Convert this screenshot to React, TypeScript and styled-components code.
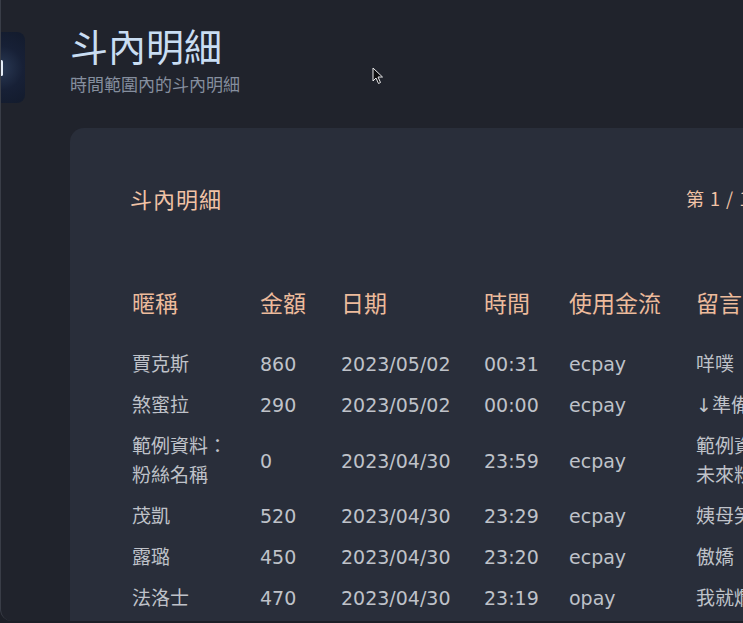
import React, { FC } from 'react'
import styled, { createGlobalStyle } from 'styled-components'

const GlobalStyle = createGlobalStyle`
  html, body {
    margin: 0;
    padding: 0;
    background: #1c1f27;
    overflow: hidden;
  }

  body {
    font-family: 'DejaVu Sans', 'Noto Sans CJK TC', sans-serif;
  }
`

const Page = styled.div`
  position: relative;
  display: flex;
  width: 1300px;
  height: 623px;
  background: #1c1f27;
`

const Main = styled.div`
  flex: 1;
  display: flex;
  height: 621px;
  background: #20232c;
  border-left: 1px solid #393d47;
  border-bottom-left-radius: 12px;
  overflow: hidden;
`

const Rail = styled.div`
  width: 24px;
  padding-top: 32px;
  overflow: hidden;
`

const RailButton = styled.div`
  position: relative;
  width: 70px;
  height: 71px;
  margin-left: -46px;
  border-radius: 8px;
  background: radial-gradient(circle at 46px 36px, #2a3954 0, #172036 22px, #121a2b 45px);
`

const RailGlyph = styled.span`
  position: absolute;
  left: 45px;
  top: 28px;
  width: 3px;
  height: 16px;
  border-radius: 2px;
  background: #e6edf7;
`

const Content = styled.div`
  flex: 1;
  padding: 21px 0 0 45px;
`

const PageTitle = styled.h1`
  margin: 0;
  color: #c9ddf2;
  font-family: 'Noto Sans CJK TC', sans-serif;
  font-weight: 400;
  font-size: 38px;
  line-height: 48px;
`

const PageSubtitle = styled.p`
  margin: 3px 0 0;
  color: #858e9e;
  font-family: 'Noto Sans CJK TC', sans-serif;
  font-size: 17px;
  line-height: 24px;
`

const Card = styled.section`
  width: 1000px;
  margin-top: 32px;
  padding: 56px 60px 0;
  min-height: 600px;
  background: #292e3a;
  border-radius: 14px;
`

const CardHead = styled.div`
  display: flex;
  justify-content: space-between;
  align-items: center;
  width: 700px;
  height: 28px;
  margin-bottom: 73px;
  color: #f1c3a6;
`

const CardTitle = styled.h2`
  margin: 0;
  font-family: 'Noto Sans CJK TC', sans-serif;
  font-weight: 400;
  font-size: 22px;
  letter-spacing: 1px;
`

const Pager = styled.span`
  width: 144px;
  font-family: 'Noto Sans CJK TC', sans-serif;
  font-size: 18px;
  white-space: nowrap;
  letter-spacing: 1px;
`

const Table = styled.table`
  width: 884px;
  border-collapse: collapse;
  table-layout: fixed;
  margin-left: 2px;
`

const HeadCell = styled.th`
  padding: 0 0 25px;
  color: #edbb9c;
  text-align: left;
  vertical-align: middle;
  font-family: 'Noto Sans CJK TC', sans-serif;
  font-weight: 400;
  font-size: 23px;
  line-height: 34px;
  white-space: nowrap;
`

const Cell = styled.td<{ $wrap?: boolean }>`
  padding: 6px 20px 6px 0;
  color: #bfc2c9;
  font-size: 19px;
  line-height: 29px;
  vertical-align: middle;
  white-space: ${({ $wrap }) => ($wrap ? 'normal' : 'nowrap')};
`

const Cursor = styled.svg`
  position: absolute;
  left: 372px;
  top: 67px;
`

const columns = [
  { label: '暱稱', width: 128 },
  { label: '金額', width: 81 },
  { label: '日期', width: 143 },
  { label: '時間', width: 85 },
  { label: '使用金流', width: 127 },
  { label: '留言', width: 320 },
]

const rows = [
  { name: '賈克斯', amount: 860, date: '2023/05/02', time: '00:31', pay: 'ecpay', msg: ['咩噗'] },
  { name: '煞蜜拉', amount: 290, date: '2023/05/02', time: '00:00', pay: 'ecpay', msg: ['↓準備好了嗎'] },
  {
    name: '範例資料：粉絲名稱',
    amount: 0,
    date: '2023/04/30',
    time: '23:59',
    pay: 'ecpay',
    msg: ['範例資料：', '未來粉絲的留言會顯示在這裡'],
  },
  { name: '茂凱', amount: 520, date: '2023/04/30', time: '23:29', pay: 'ecpay', msg: ['姨母笑'] },
  { name: '露璐', amount: 450, date: '2023/04/30', time: '23:20', pay: 'ecpay', msg: ['傲嬌'] },
  { name: '法洛士', amount: 470, date: '2023/04/30', time: '23:19', pay: 'opay', msg: ['我就爛'] },
]

const App: FC = () => {
  return (
    <Page>
      <GlobalStyle />
      <Main>
        <Rail>
          <RailButton>
            <RailGlyph />
          </RailButton>
        </Rail>
        <Content>
          <PageTitle>斗內明細</PageTitle>
          <PageSubtitle>時間範圍內的斗內明細</PageSubtitle>
          <Card>
            <CardHead>
              <CardTitle>斗內明細</CardTitle>
              <Pager>第 1 / 1 頁</Pager>
            </CardHead>
            <Table>
              <colgroup>
                {columns.map((c) => (
                  <col key={c.label} style={{ width: c.width }} />
                ))}
              </colgroup>
              <thead>
                <tr>
                  {columns.map((c) => (
                    <HeadCell key={c.label}>{c.label}</HeadCell>
                  ))}
                </tr>
              </thead>
              <tbody>
                {rows.map((r) => (
                  <tr key={r.name}>
                    <Cell $wrap>{r.name}</Cell>
                    <Cell>{r.amount}</Cell>
                    <Cell>{r.date}</Cell>
                    <Cell>{r.time}</Cell>
                    <Cell>{r.pay}</Cell>
                    <Cell>
                      {r.msg.map((line, i) => (
                        <React.Fragment key={i}>
                          {i > 0 && <br />}
                          {line}
                        </React.Fragment>
                      ))}
                    </Cell>
                  </tr>
                ))}
              </tbody>
            </Table>
          </Card>
        </Content>
      </Main>
      <Cursor width="12" height="18" viewBox="0 0 12 18">
        <path d="M1 1 L1 14 L4 11 L6.5 16.5 L8.5 15.5 L6 10 L10.5 10 Z" fill="#0d0d0f" stroke="#e8e8ea" strokeWidth="1" strokeLinejoin="round" />
      </Cursor>
    </Page>
  )
}

export default App
